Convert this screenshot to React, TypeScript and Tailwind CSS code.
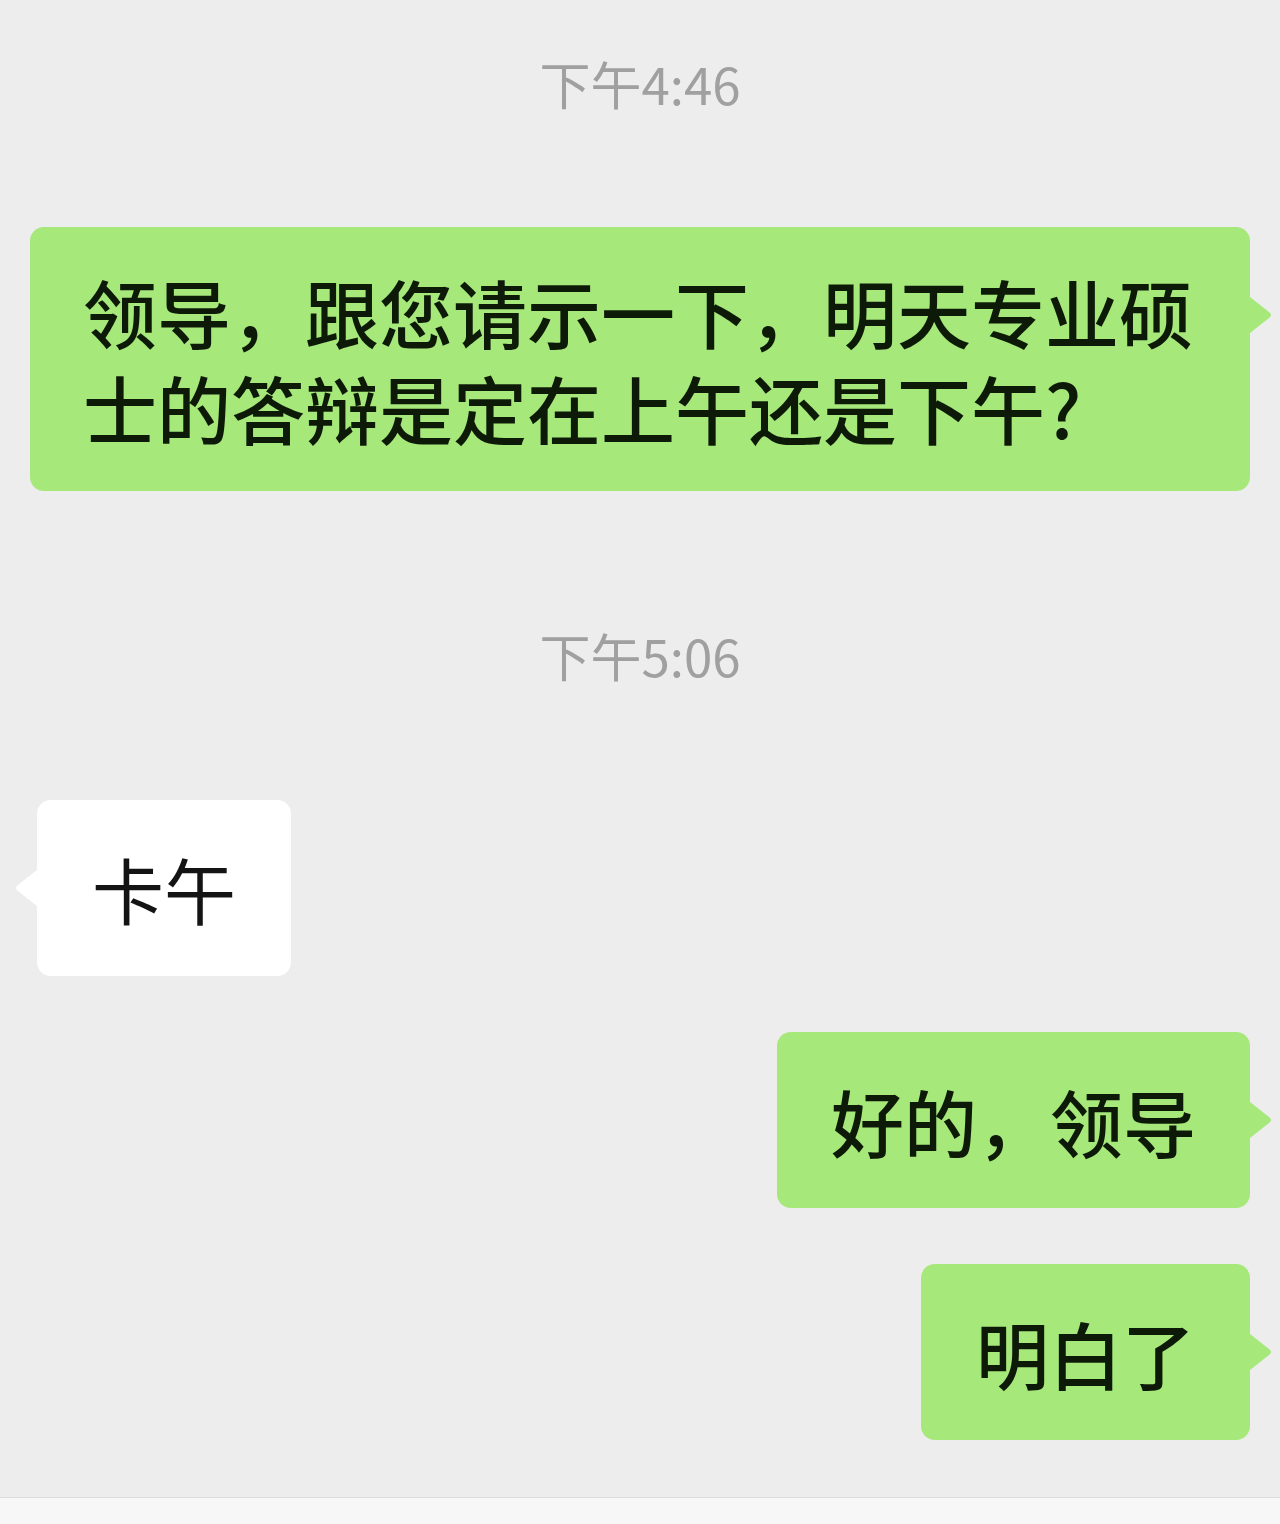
import React from "react";

const FONT = { fontFamily: '"Noto Sans CJK SC", "Noto Sans", sans-serif' };

function TailRight({ color }: { color: string }) {
  return (
    <svg
      className="absolute left-full top-[70px]"
      width="24"
      height="36"
      viewBox="0 0 24 36"
    >
      <path d="M0 0 L19 15 Q23 18 19 21 L0 36 Z" fill={color} />
    </svg>
  );
}

function TailLeft({ color }: { color: string }) {
  return (
    <svg
      className="absolute right-full top-[70px]"
      width="24"
      height="36"
      viewBox="0 0 24 36"
    >
      <path d="M24 0 L5 15 Q1 18 5 21 L24 36 Z" fill={color} />
    </svg>
  );
}

function Time({ children, className }: { children: React.ReactNode; className?: string }) {
  return (
    <div
      className={`text-center text-[51px] leading-[56px] text-[#a0a0a0] ${className ?? ""}`}
      style={FONT}
    >
      {children}
    </div>
  );
}

export default function App() {
  const green = "#a7e87b";
  return (
    <div className="flex min-h-[1524px] w-[1280px] flex-col bg-[#ededed]" style={FONT}>
      <Time className="pt-[55px]">下午4:46</Time>

      <div className="mt-[116px] flex pl-[30px]">
        <div className="relative w-[1220px] rounded-[14px] bg-[#a7e87b] px-[53px] py-[36px] text-[74px] font-medium leading-[96px] text-[#0d1a08]">
          领导，跟您请示一下，明天专业硕士的答辩是定在上午还是下午?
          <TailRight color={green} />
        </div>
      </div>

      <Time className="mt-[136px]">下午5:06</Time>

      <div className="mt-[117px] flex pl-[37px]">
        <div className="relative rounded-[14px] bg-white px-[55px] py-[40px] text-[72px] leading-[96px] text-[#141414]">
          卡午
          <TailLeft color="#ffffff" />
        </div>
      </div>

      <div className="mt-[56px] flex justify-end pr-[30px]">
        <div className="relative rounded-[14px] bg-[#a7e87b] px-[54px] py-[40px] text-[73px] font-medium leading-[96px] text-[#0d1a08]">
          好的，领导
          <TailRight color={green} />
        </div>
      </div>

      <div className="mt-[56px] flex justify-end pr-[30px]">
        <div className="relative rounded-[14px] bg-[#a7e87b] px-[55px] py-[40px] text-[73px] font-medium leading-[96px] text-[#0d1a08]">
          明白了
          <TailRight color={green} />
        </div>
      </div>

      <div className="flex-1" />
      <div className="h-[27px] border-t border-[#dcdcdc] bg-[#f7f7f7]" />
    </div>
  );
}
